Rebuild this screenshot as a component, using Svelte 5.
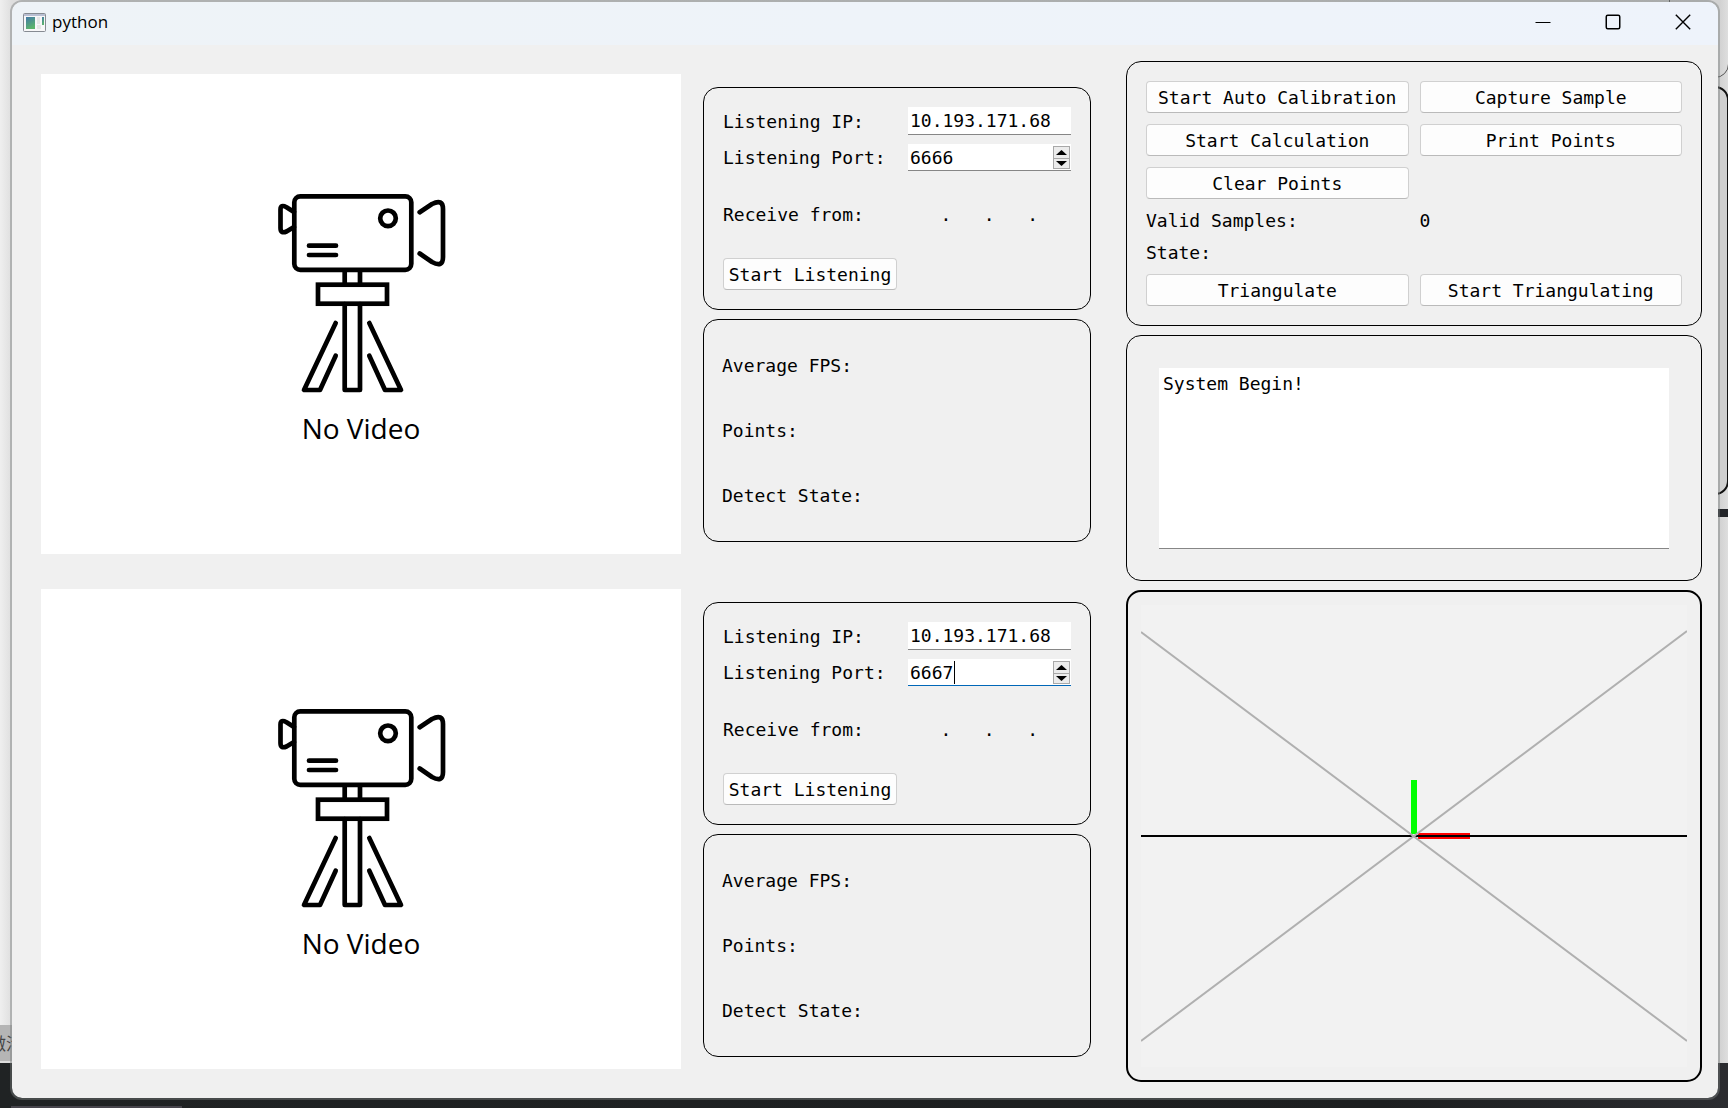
<script>
  const cameras = [
    { id: 'a', ip: '10.193.171.68', port: 6666, focused: false },
    { id: 'b', ip: '10.193.171.68', port: 6667, focused: true }
  ];
  let ports = $state(cameras.map((c) => c.port));
  let log = $state('System Begin!');
</script>

<div class="desktop">
  <div class="behind" aria-hidden="true">
    <div class="back-panel upper"></div>
    <div class="back-panel lower"></div>
    <div class="back-bar"></div>
    <div class="back-note"><span>激活</span></div>
    <div class="taskbar"></div>
  </div>

  <main class="window">
    <header class="titlebar">
      <svg class="app-icon" viewBox="0 0 23 19" aria-hidden="true">
        <defs>
          <linearGradient id="pane" x1="0" y1="0" x2="0.4" y2="1">
            <stop offset="0" stop-color="#4279a8" />
            <stop offset="1" stop-color="#5cb46c" />
          </linearGradient>
        </defs>
        <rect x="0.5" y="0.5" width="22" height="18" rx="1" fill="#f7f7f8" stroke="#868b92" />
        <rect x="1" y="1" width="21" height="2" fill="#b9bfd2" />
        <rect x="3" y="4" width="9" height="12" fill="url(#pane)" />
        <rect x="14" y="4" width="3" height="7" fill="#e6e6e6" />
        <rect x="14" y="12" width="4" height="4" fill="#e6e6e6" />
        <rect x="19" y="4" width="2" height="8" fill="url(#pane)" />
      </svg>
      <h1>python</h1>
      <div class="window-buttons">
        <button type="button" aria-label="Minimize">
          <svg viewBox="0 0 16 16"><path d="M0.5 8.5H15.5" /></svg>
        </button>
        <button type="button" aria-label="Maximize">
          <svg viewBox="0 0 16 16"><rect x="1.25" y="1.25" width="13.5" height="13.5" rx="1.5" stroke-width="1.5" /></svg>
        </button>
        <button type="button" aria-label="Close">
          <svg viewBox="0 0 16 16"><path d="M0.8 0.8L15.2 15.2M15.2 0.8L0.8 15.2" stroke-width="1.4" /></svg>
        </button>
      </div>
    </header>

    <div class="content">
      <section class="videos">
        {#each cameras as cam (cam.id)}
          <svg class="video" viewBox="0 0 640 480" role="img" aria-label="No Video">
            <g fill="none" stroke="#000" stroke-width="4.700" stroke-linecap="round" stroke-linejoin="round">
              <rect x="253.300" y="122.300" width="117" height="73.500" rx="6" />
              <circle cx="347" cy="144.300" r="7.800" />
              <path d="M268 171.700H295M268 181H295" />
              <path d="M253 138L245.500 133.200Q239.500 130 239.500 135.500V154Q239.500 160 245.500 157.500L253 153" />
              <path d="M378.700 138.300L391 130Q402 124.500 402 135V183Q402 194 391 188L378.700 179.500" />
              <path d="M303.700 197V210M319 197V210" />
              <rect x="277" y="210.700" width="69" height="19" stroke-linejoin="miter" />
              <path d="M303.700 230V316H319V230" />
              <path d="M294.700 249L263 316H279L294.700 281.700" />
              <path d="M328.300 249L360 316H344L328.300 281.700" />
            </g>
            <text x="320" y="365" text-anchor="middle">No Video</text>
          </svg>
        {/each}
      </section>

      <section class="feeds">
        {#each cameras as cam, i (cam.id)}
          <div class="feed">
            <form class="panel listen">
              <label for="ip-{cam.id}">Listening IP:</label>
              <input id="ip-{cam.id}" class="field" type="text" value={cam.ip} />

              <label for="port-{cam.id}">Listening Port:</label>
              <div class="spin" class:focused={cam.focused}>
                <input id="port-{cam.id}" class="field" type="number" bind:value={ports[i]} />
                {#if cam.focused}<span class="caret"></span>{/if}
                <div class="steps">
                  <button type="button" aria-label="Increase port" onclick={() => ports[i]++}>
                    <svg viewBox="0 0 11 5"><path d="M0 5L5.500 0L11 5Z" /></svg>
                  </button>
                  <button type="button" aria-label="Decrease port" onclick={() => ports[i]--}>
                    <svg viewBox="0 0 11 5"><path d="M0 0L5.500 5L11 0Z" /></svg>
                  </button>
                </div>
              </div>

              <span>Receive from:</span>
              <output class="source">{'   .   .   . '}</output>

              <button type="button" class="push">Start Listening</button>
            </form>

            <div class="panel stats">
              <span>Average FPS:</span>
              <span>Points:</span>
              <span>Detect State:</span>
            </div>
          </div>
        {/each}
      </section>

      <section class="tools">
        <div class="panel actions">
          <button type="button" class="push">Start Auto Calibration</button>
          <button type="button" class="push">Capture Sample</button>
          <button type="button" class="push">Start Calculation</button>
          <button type="button" class="push">Print Points</button>
          <button type="button" class="push first">Clear Points</button>
          <span class="first">Valid Samples:</span>
          <span>0</span>
          <span class="first">State:</span>
          <button type="button" class="push first">Triangulate</button>
          <button type="button" class="push">Start Triangulating</button>
        </div>

        <div class="panel log">
          <textarea aria-label="Log" bind:value={log}></textarea>
        </div>

        <div class="panel plot">
          <svg viewBox="0 0 546 462" preserveAspectRatio="none" role="img" aria-label="Axes">
            <rect width="546" height="462" fill="#f2f2f2" />
            <rect x="270" y="175" width="6" height="54" fill="#0f0" />
            <rect x="277" y="228" width="52" height="6" fill="#f00" />
            <path d="M0 231H546" stroke="#000" stroke-width="2" />
            <path d="M0 27L546 436M546 26L0 436" stroke="#b0b0b0" stroke-width="2" />
          </svg>
        </div>
      </section>
    </div>
  </main>
</div>

<style>
  :global(body) {
    background: #e6e6e6;
  }

  .desktop {
    position: relative;
    display: flex;
    min-height: 100vh;
    box-sizing: border-box;
    padding: 0 8px 8px 10px;
    overflow: hidden;
    color: #000;
    font: 18px/21px 'DejaVu Sans Mono', monospace;
  }

  /* Other windows showing round the edges */
  .behind {
    position: absolute;
    inset: 0;
    background: linear-gradient(90deg, #efefef 0, #dedede 12px, #d2d2d2 calc(100% - 8px), #dedede 100%);
  }

  .back-panel {
    position: absolute;
    right: -1px;
    width: 60px;
    box-sizing: border-box;
    border: 1px solid #555;
    border-radius: 14px;
  }

  .back-panel.upper {
    top: -20px;
    height: 98px;
  }

  .back-panel.lower {
    top: 86px;
    height: 409px;
    border: 2px solid #111;
    background: #cfcfcf;
  }

  .back-bar {
    position: absolute;
    top: 509px;
    right: 0;
    width: 40px;
    height: 8px;
    background: #222428;
  }

  .back-note {
    position: absolute;
    left: 0;
    bottom: 45px;
    display: flex;
    justify-content: center;
    width: 12px;
    height: 36px;
    border-bottom: 2px solid #ddd;
    background: #b5b5b5;
    color: #444;
    font: 17px/36px 'Noto Sans CJK SC', sans-serif;
    white-space: nowrap;
    overflow: hidden;
  }

  .taskbar {
    position: absolute;
    inset: auto 0 0;
    height: 45px;
    background: linear-gradient(90deg, #202324 0, #1d1f20 80%, #2b2c30 100%);
  }

  .taskbar::after {
    content: '';
    position: absolute;
    left: 11px;
    bottom: 0;
    width: 171px;
    height: 2px;
    background: #47454c;
  }

  .window {
    position: relative;
    display: flex;
    flex: 1;
    flex-direction: column;
    border: 2px solid rgba(120, 124, 124, 0.45);
    border-radius: 12px;
    background: #f0f0f0;
    background-clip: padding-box;
    overflow: hidden;
  }

  .titlebar {
    display: flex;
    align-items: center;
    box-sizing: border-box;
    height: 43px;
    padding: 0 0 3px 11px;
    background: linear-gradient(90deg, #eef3f7, #eef3fb);
  }

  .app-icon {
    width: 23px;
    height: 19px;
  }

  h1 {
    flex: 1;
    margin: 0 0 0 6px;
    font: 17px/24px 'Open Sans', sans-serif;
  }

  .window-buttons {
    display: flex;
    align-self: stretch;
  }

  .window-buttons button {
    display: grid;
    place-items: center;
    width: 70px;
    padding: 0;
    border: 0;
    background: none;
  }

  .window-buttons svg {
    width: 16px;
    height: 16px;
    fill: none;
    stroke: #000;
  }

  .content {
    display: flex;
    flex: 1;
    padding: 0 16px 0 29px;
  }

  .videos,
  .feeds {
    display: flex;
    flex-direction: column;
    gap: 35px;
    padding: 29px 0;
    min-width: 0;
  }

  .videos {
    flex: 640 1 0;
  }

  .feeds {
    flex: 388 1 0;
    margin: 0 35px 0 22px;
  }

  .video {
    display: block;
    width: 100%;
    aspect-ratio: 4 / 3;
    background: #fff;
  }

  .video text {
    font: 28px 'Open Sans', sans-serif;
  }

  .feed {
    display: flex;
    flex: 1;
    flex-direction: column;
    gap: 9px;
    padding: 13px 0 12px;
  }

  .panel {
    box-sizing: border-box;
    border: 1px solid #000;
    border-radius: 15px;
    padding: 19px 19px 19px 18px;
  }

  .listen {
    display: grid;
    flex: 1 1 0;
    grid-template: 28px 27px 1fr 32px / 174px 1fr;
    gap: 9px 11px;
    align-items: center;
    padding-left: 19px;
  }

  .stats {
    display: grid;
    flex: 1 1 0;
    grid-auto-rows: 1fr;
    gap: 11px;
    align-items: center;
  }

  .field {
    display: block;
    box-sizing: border-box;
    width: 100%;
    height: 100%;
    min-width: 0;
    margin: 0;
    padding: 0 2px;
    border: 0;
    border-bottom: 1px solid #868686;
    border-radius: 0;
    background: #fff;
    color: #000;
    font: inherit;
    outline: none;
    appearance: textfield;
  }

  .field::-webkit-inner-spin-button {
    display: none;
  }

  .spin {
    position: relative;
    height: 100%;
  }

  .focused .field {
    border-bottom-color: #0067b8;
  }

  .caret {
    position: absolute;
    top: 2px;
    bottom: 2px;
    left: calc(3px + 4ch);
    width: 1px;
    background: #000;
  }

  .steps {
    position: absolute;
    top: 2px;
    right: 1px;
    bottom: 2px;
    display: grid;
    width: 17px;
    grid-template-rows: 1fr 1fr;
    box-sizing: border-box;
    border: 1px solid #a8a8a8;
  }

  .steps button {
    display: grid;
    place-items: center;
    padding: 0;
    border: 0;
    background: #ececec;
  }

  .steps button + button {
    border-top: 1px solid #a8a8a8;
  }

  .steps svg {
    width: 11px;
    height: 5px;
  }

  .source {
    white-space: pre;
  }

  .push {
    height: 32px;
    padding: 0;
    border: 1px solid #d0d0d0;
    border-bottom-color: #bababa;
    border-radius: 4px;
    background: #fdfdfd;
    color: #000;
    font: inherit;
    white-space: nowrap;
  }

  .tools {
    display: flex;
    flex: 576 1 0;
    flex-direction: column;
    gap: 9px;
    min-width: 0;
    padding: 16px 0;
  }

  .actions {
    display: grid;
    grid-template-columns: 1fr 1fr;
    gap: 11px;
    padding-left: 19px;
  }

  .first {
    grid-column: 1;
  }

  .log {
    display: flex;
    padding: 32px 32px 31px;
  }

  textarea {
    flex: 1;
    box-sizing: border-box;
    min-width: 0;
    height: 181px;
    padding: 5px 4px;
    border: 0;
    border-bottom: 1px solid #868686;
    background: #fff;
    color: #000;
    font: inherit;
    outline: none;
    resize: none;
  }

  .plot {
    display: flex;
    flex: 1;
    border-width: 2px;
    padding: 13px;
  }

  .plot svg {
    flex: 1;
    width: 100%;
    min-height: 0;
  }
</style>
